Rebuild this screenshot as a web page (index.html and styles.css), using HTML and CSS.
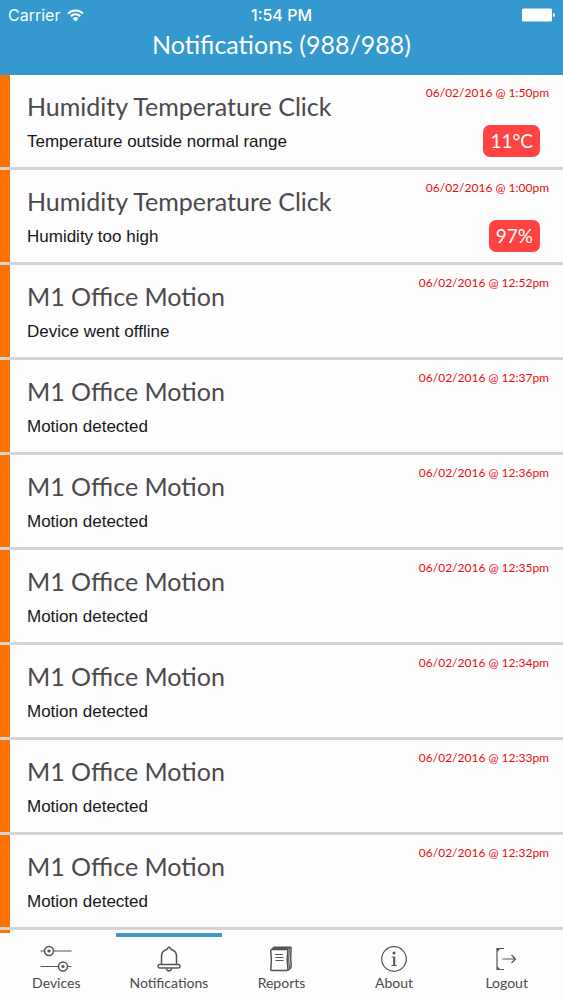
FILE: index.html
```html
<!DOCTYPE html>
<html lang="en">
<head>
<meta charset="utf-8">
<meta name="viewport" content="width=device-width, initial-scale=1">
<title>Notifications</title>
<link rel="stylesheet" href="styles.css">
</head>
<body>
<header class="header">
  <div class="status">
    <div class="carrier">
      <span>Carrier</span>
      <svg class="wifi" viewBox="0 0 17 13" aria-hidden="true">
        <path d="M1 4.6a10.6 10.6 0 0 1 15 0M3.7 7.3a6.8 6.8 0 0 1 9.6 0" fill="none" stroke="#fff" stroke-width="2"/>
        <path d="M8.500 12.500L5.600 9.500a4.100 4.100 0 0 1 5.800 0z" fill="#fff"/>
      </svg>
    </div>
    <time class="clock">1:54 PM</time>
    <svg class="battery" viewBox="0 0 33 14" aria-hidden="true">
      <rect width="30" height="13" y="0.500" rx="1.500" fill="#fff"/>
      <path d="M31 5c2.400 0 2.400 4 0 4z" fill="#fff"/>
    </svg>
  </div>
  <h1 class="title">Notifications (988/988)</h1>
</header>
<main class="list-area">
  <ul class="list">
    <li class="item"><article class="card"><div class="text"><h2 class="device">Humidity Temperature Click</h2><p class="message">Temperature outside normal range</p></div><div class="meta"><time class="date">06/02/2016 @ 1:50pm</time><span class="badge">11°C</span></div></article></li>
    <li class="item"><article class="card"><div class="text"><h2 class="device">Humidity Temperature Click</h2><p class="message">Humidity too high</p></div><div class="meta"><time class="date">06/02/2016 @ 1:00pm</time><span class="badge">97%</span></div></article></li>
    <li class="item"><article class="card"><div class="text"><h2 class="device">M1 Office Motion</h2><p class="message">Device went offline</p></div><div class="meta"><time class="date">06/02/2016 @ 12:52pm</time></div></article></li>
    <li class="item"><article class="card"><div class="text"><h2 class="device">M1 Office Motion</h2><p class="message">Motion detected</p></div><div class="meta"><time class="date">06/02/2016 @ 12:37pm</time></div></article></li>
    <li class="item"><article class="card"><div class="text"><h2 class="device">M1 Office Motion</h2><p class="message">Motion detected</p></div><div class="meta"><time class="date">06/02/2016 @ 12:36pm</time></div></article></li>
    <li class="item"><article class="card"><div class="text"><h2 class="device">M1 Office Motion</h2><p class="message">Motion detected</p></div><div class="meta"><time class="date">06/02/2016 @ 12:35pm</time></div></article></li>
    <li class="item"><article class="card"><div class="text"><h2 class="device">M1 Office Motion</h2><p class="message">Motion detected</p></div><div class="meta"><time class="date">06/02/2016 @ 12:34pm</time></div></article></li>
    <li class="item"><article class="card"><div class="text"><h2 class="device">M1 Office Motion</h2><p class="message">Motion detected</p></div><div class="meta"><time class="date">06/02/2016 @ 12:33pm</time></div></article></li>
    <li class="item"><article class="card"><div class="text"><h2 class="device">M1 Office Motion</h2><p class="message">Motion detected</p></div><div class="meta"><time class="date">06/02/2016 @ 12:32pm</time></div></article></li>
  </ul>
</main>
<nav class="tabs">
  <a class="tab" href="#devices">
    <svg class="icon" viewBox="0 0 32 28" aria-hidden="true">
      <path d="M.5 6h4M13.500 6H31.500M.5 21.500h17.500M27.500 21.500h4" class="line thin"/>
      <circle cx="9" cy="6" r="4.500" class="line"/><circle cx="23" cy="21.500" r="4.500" class="line"/>
      <circle cx="9" cy="6" r="1.600" class="dot"/><circle cx="23" cy="21.500" r="1.600" class="dot"/>
    </svg>
    <span>Devices</span>
  </a>
  <a class="tab active" href="#notifications" aria-current="page">
    <svg class="icon" viewBox="0 0 32 28" aria-hidden="true">
      <path d="M8.500 19.500V11.500c0-3.700 2-6 5-7 1-.4 1.500-2.500 2.500-2.500s1.500 2.100 2.500 2.500c3 1 5 3.300 5 7v8" class="line"/>
      <rect x="5" y="19.500" width="22" height="3.500" rx="1.700" class="line"/>
      <path d="M13.500 23.500c.3 3.200 4.700 3.200 5 0" class="line"/>
    </svg>
    <span>Notifications</span>
  </a>
  <a class="tab" href="#reports">
    <svg class="icon" viewBox="0 0 32 28" aria-hidden="true">
      <path d="M6.500 4.500H22c.8 0 .8 1 .7 2-.8 6-.8 10 .1 16 .2 1.500 0 3-1 3H7c-1.300 0-1.300-1-1.100-2.500.7-5 .7-10-.1-16 0-1.500 0-2.500.7-2.500z" class="line"/>
      <path d="M7 4.200l2-1.900h16.500c.8 0 .7 1 .6 2-.7 6-.7 10 .1 16 .2 2-1 3.800-3.500 5M9 3.200h16" class="line"/>
      <path d="M24.300 3.500c-.8 7-.8 13 .1 20" class="line thin"/>
      <path d="M10 9.500h8M10.500 12.500h8M10.500 15.500h8" class="line thin"/>
    </svg>
    <span>Reports</span>
  </a>
  <a class="tab" href="#about">
    <svg class="icon" viewBox="0 0 32 28" aria-hidden="true">
      <circle cx="16" cy="14" r="12.300" class="line thin"/>
      <circle cx="16" cy="8" r="1.500" class="dot"/>
      <path d="M13.800 11.500h3.400v8.500h1.600v1H13.500v-1h1.700v-7.500h-1.400z" class="dot"/>
    </svg>
    <span>About</span>
  </a>
  <a class="tab" href="#logout">
    <svg class="icon" viewBox="0 0 32 28" aria-hidden="true">
      <path d="M13 3.500H6v21H13M11.500 14h12.500M20.500 10l4 4-4 4" class="line thin"/>
      <path d="M6 3.500h3.500L6 7zM6 24.500h3.500L6 21z" class="dot"/>
    </svg>
    <span>Logout</span>
  </a>
</nav>
</body>
</html>
```
FILE: styles.css
```css
* { box-sizing: border-box; }
body {
  margin: 0;
  height: 100vh;
  display: flex;
  flex-direction: column;
  background: #fdfdfd;
  font-family: Lato, "Open Sans", sans-serif;
}
h1, h2, p, ul { margin: 0; padding: 0; }
.header { background: #3399ce; color: #fff; padding: 4px 8px 13px; }
.status {
  display: grid;
  grid-template-columns: 1fr auto 1fr;
  align-items: center;
  font-family: Inter, sans-serif;
  font-size: 16px;
  line-height: 22px;
}
.carrier { display: flex; align-items: center; gap: 7px; }
.wifi { width: 17px; height: 13px; }
.clock { font-weight: 500; }
.battery { width: 33px; height: 14px; justify-self: end; }
.title { font-size: 25px; line-height: 36px; font-weight: 400; text-align: center; }
.list-area { flex: 1; min-height: 0; overflow: hidden; display: flex; flex-direction: column; }
.list-area::after { content: ""; flex: 1; border-left: 10px solid #ff7200; }
.list { list-style: none; }
.item { border-bottom: 3px solid #d5d3d4; }
.card {
  display: flex;
  justify-content: space-between;
  height: 92px;
  border-left: 10px solid #ff7200;
  padding: 8px 14px 0 17px;
}
.device { font-size: 25px; line-height: 46px; font-weight: 400; color: #4b494b; }
.message { font-family: "Liberation Sans", sans-serif; font-size: 17px; line-height: 26px; color: #171717; }
.meta { display: flex; flex-direction: column; align-items: flex-end; }
.date { font-size: 12px; line-height: 20px; color: #e80c0c; }
.badge {
  margin: 22px 9px 0 0;
  padding: 0 7px;
  border-radius: 7px;
  background: #ff4242;
  color: #fff;
  font-size: 19px;
  line-height: 32px;
}
.tabs { display: flex; height: 67px; }
.tab {
  flex: 1;
  display: flex;
  flex-direction: column;
  align-items: center;
  margin: 0 3px;
  padding-top: 8px;
  border-top: 4px solid transparent;
  color: #4b494b;
  font-size: 14px;
  line-height: 20px;
  text-decoration: none;
}
.active { border-top-color: #4299c4; }
.icon { width: 32px; height: 28px; }
.line { fill: none; stroke: #555358; stroke-width: 1.5; }
.thin { stroke-width: 1.2; }
.dot { fill: #555358; }
```
